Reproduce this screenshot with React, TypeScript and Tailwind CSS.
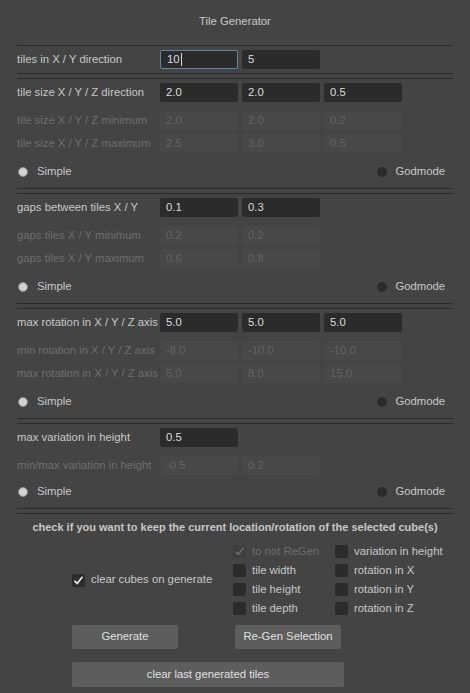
import React from 'react';

type FieldRow = {
  label: string;
  values: string[];
  dim?: boolean;
  focus?: number;
};

interface Section {
  rows: FieldRow[];
  radio?: boolean;
}

const SECTIONS: Section[] = [
  {
    rows: [{ label: 'tiles in X / Y direction', values: ['10', '5'], focus: 0 }],
  },
  {
    rows: [
      { label: 'tile size X / Y / Z direction', values: ['2.0', '2.0', '0.5'] },
      { label: 'tile size X / Y / Z minimum', values: ['2.0', '2.0', '0.2'], dim: true },
      { label: 'tile size X / Y / Z maximum', values: ['2.5', '3.0', '0.5'], dim: true },
    ],
    radio: true,
  },
  {
    rows: [
      { label: 'gaps between tiles X / Y', values: ['0.1', '0.3'] },
      { label: 'gaps tiles X / Y minimum', values: ['0.2', '0.2'], dim: true },
      { label: 'gaps tiles X / Y maximum', values: ['0.6', '0.8'], dim: true },
    ],
    radio: true,
  },
  {
    rows: [
      { label: 'max rotation in X / Y / Z axis', values: ['5.0', '5.0', '5.0'] },
      { label: 'min rotation in X / Y / Z axis', values: ['-8.0', '-10.0', '-10.0'], dim: true },
      { label: 'max rotation in X / Y / Z axis', values: ['5.0', '8.0', '15.0'], dim: true },
    ],
    radio: true,
  },
  {
    rows: [
      { label: 'max variation in height', values: ['0.5'] },
      { label: 'min/max variation in height', values: ['-0.5', '0.2'], dim: true },
    ],
    radio: true,
  },
];

const Line = () => <div className="mx-[17px] h-px bg-[#2b2b2b]" />;

const DoubleLine = () => (
  <div className="flex flex-col gap-[4px]">
    <Line />
    <Line />
  </div>
);

const Field = ({ value, dim, focus }: { value: string; dim?: boolean; focus?: boolean }) => (
  <div
    className={`flex h-[19px] w-[78px] items-center rounded-[2px] pl-[6px] ${
      dim ? 'bg-[#484848] text-[#646464]' : 'bg-[#2b2b2b] text-[#dcdcdc]'
    } ${focus ? 'border border-[#5a87a8] pl-[5px]' : ''}`}
  >
    {value}
    {focus && <span className="ml-px h-[13px] w-px bg-[#dcdcdc]" />}
  </div>
);

const Row = ({ row, className = '' }: { row: FieldRow; className?: string }) => (
  <div className={`flex h-[19px] items-center pl-[17px] ${className}`}>
    <div className={`w-[143px] whitespace-nowrap ${row.dim ? 'text-[#6e6e6e]' : 'text-[#c8c8c8]'}`}>
      {row.label}
    </div>
    <div className="flex gap-[4px]">
      {row.values.map((v, i) => (
        <Field key={i} value={v} dim={row.dim} focus={row.focus === i} />
      ))}
    </div>
  </div>
);

const RadioRow = ({ last }: { last?: boolean }) => (
  <div
    className={`flex h-[20px] items-center justify-between pl-[18px] pr-[25px] ${
      last ? 'mt-[7px]' : 'mt-[9px]'
    }`}
  >
    <div className="flex items-center gap-[9px]">
      <span className="h-[10px] w-[10px] rounded-full border border-[#8a8a8a] bg-[#d2d2d2]" />
      <span className="text-[#c8c8c8]">Simple</span>
    </div>
    <div className="flex items-center gap-[8px]">
      <span className="h-[10px] w-[10px] rounded-full bg-[#2b2b2b]" />
      <span className="text-[#c8c8c8]">Godmode</span>
    </div>
  </div>
);

const Check = ({ on, dim }: { on?: boolean; dim?: boolean }) => (
  <span
    className={`flex h-[13px] w-[13px] items-center justify-center rounded-[2px] ${
      dim ? 'bg-[#3e3e3e]' : 'bg-[#2b2b2b]'
    }`}
  >
    {on && (
      <svg width="11" height="11" viewBox="0 0 11 11">
        <path
          d="M1.5 5.8 L4.2 8.5 L9.5 1.8"
          fill="none"
          stroke={dim ? '#6a6a6a' : '#e6e6e6'}
          strokeWidth="1.8"
        />
      </svg>
    )}
  </span>
);

const CheckItem = ({ label, on, dim }: { label: string; on?: boolean; dim?: boolean }) => (
  <div className="flex h-[19px] items-center gap-[6px] whitespace-nowrap">
    <Check on={on} dim={dim} />
    <span className={dim ? 'text-[#6e6e6e]' : 'text-[#c8c8c8]'}>{label}</span>
  </div>
);

const Button = ({ label, className = '' }: { label: string; className?: string }) => (
  <div
    className={`flex items-center justify-center rounded-[2px] bg-[#5d5d5d] text-[#e0e0e0] ${className}`}
  >
    {label}
  </div>
);

export default function App() {
  return (
    <div
      className="flex h-[693px] w-[470px] flex-col bg-[#444444] text-[11.3px] leading-none"
      style={{ fontFamily: '"Liberation Sans", Arial, sans-serif' }}
    >
      <div className="flex h-[45px] justify-center pt-[16px] text-[#c8c8c8]">Tile Generator</div>

      {SECTIONS.map((section, si) => (
        <div key={si} className="flex flex-col">
          {si === 0 ? <Line /> : <DoubleLine />}
          <div className="flex flex-col pt-[4px]">
            {section.rows.map((row, ri) => (
              <Row
                key={ri}
                row={row}
                className={ri === 1 ? 'mt-[9px]' : ri === 2 ? 'mt-[4px]' : ''}
              />
            ))}
            {section.radio && <RadioRow last={si === SECTIONS.length - 1} />}
          </div>
          <div className={section.radio ? 'h-[6px]' : 'h-[4px]'} />
        </div>
      ))}

      <DoubleLine />

      <div className="mt-[8px] text-center text-[11px] font-bold text-[#c8c8c8]">
        check if you want to keep the current location/rotation of the selected cube(s)
      </div>

      <div className="mt-[9px] flex pl-[72px]">
        <div className="flex w-[161px] items-center">
          <CheckItem label="clear cubes on generate" on />
        </div>
        <div className="flex w-[102px] flex-col">
          <CheckItem label="to not ReGen" on dim />
          <CheckItem label="tile width" />
          <CheckItem label="tile height" />
          <CheckItem label="tile depth" />
        </div>
        <div className="flex flex-col">
          <CheckItem label="variation in height" />
          <CheckItem label="rotation in X" />
          <CheckItem label="rotation in Y" />
          <CheckItem label="rotation in Z" />
        </div>
      </div>

      <div className="mt-[7px] flex gap-[57px] pl-[72px]">
        <Button label="Generate" className="h-[24px] w-[106px]" />
        <Button label="Re-Gen Selection" className="h-[24px] w-[106px]" />
      </div>
      <div className="mt-[13px] flex pl-[72px]">
        <Button label="clear last generated tiles" className="h-[25px] w-[272px]" />
      </div>
    </div>
  );
}
